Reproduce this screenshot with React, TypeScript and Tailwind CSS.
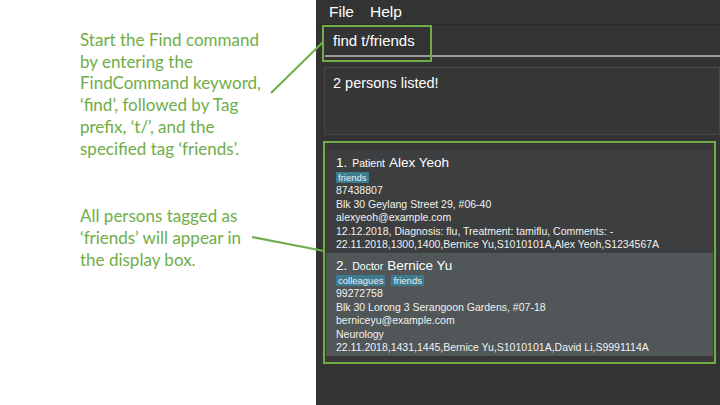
import React from "react"

const GREEN = "#70ad47"

interface Person {
  index: number
  role: string
  name: string
  tags: string[]
  lines: string[]
}

const persons: Person[] = [
  {
    index: 1,
    role: "Patient",
    name: "Alex Yeoh",
    tags: ["friends"],
    lines: [
      "87438807",
      "Blk 30 Geylang Street 29, #06-40",
      "alexyeoh@example.com",
      "12.12.2018, Diagnosis: flu, Treatment: tamiflu, Comments: -",
      "22.11.2018,1300,1400,Bernice Yu,S1010101A,Alex Yeoh,S1234567A",
    ],
  },
  {
    index: 2,
    role: "Doctor",
    name: "Bernice Yu",
    tags: ["colleagues", "friends"],
    lines: [
      "99272758",
      "Blk 30 Lorong 3 Serangoon Gardens, #07-18",
      "berniceyu@example.com",
      "Neurology",
      "22.11.2018,1431,1445,Bernice Yu,S1010101A,David Li,S9991114A",
    ],
  },
]

function PersonCard({ person, odd }: { person: Person; odd: boolean }) {
  return (
    <div className={`h-[103px] overflow-hidden pl-[10px] pt-[5px] ${odd ? "bg-[#3c3e3f]" : "bg-[#515658]"}`}>
      <div className="flex items-baseline h-[16px] leading-[16px] text-white">
        <span className="text-[13.5px]">{person.index}.</span>
        <span className="text-[10.5px] ml-[5px]">{person.role}</span>
        <span className="text-[13.5px] ml-[4px]">{person.name}</span>
      </div>
      <div className="flex gap-[6px] mt-[1px] h-[11px]">
        {person.tags.map((tag) => (
          <span key={tag} className="bg-[#3e7b91] text-[#e8f0f2] text-[9.5px] leading-[11px] px-[2px]">
            {tag}
          </span>
        ))}
      </div>
      <div className="mt-[1px] text-[10.5px] leading-[13.5px] text-[#f2f2f2]">
        {person.lines.map((line) => (
          <div key={line} className="whitespace-nowrap">{line}</div>
        ))}
      </div>
    </div>
  )
}

export default function App() {
  return (
    <div
      className="relative flex w-[720px] h-[405px] bg-white overflow-hidden"
      style={{ fontFamily: '"Liberation Sans", Arial, sans-serif' }}
    >
      {/* annotations */}
      <div
        className="w-[316px] pl-[80px] pt-[29px] text-[17px] leading-[21.7px] text-[#70ad47]"
        style={{ fontFamily: 'Lato, "Open Sans", sans-serif' }}
      >
        <p>
          Start the Find command
          <br />
          by entering the
          <br />
          FindCommand keyword,
          <br />
          ‘find’, followed by Tag
          <br />
          prefix, ‘t/’, and the
          <br />
          specified tag ‘friends’.
        </p>
        <p className="mt-[46px]">
          All persons tagged as
          <br />
          ‘friends’ will appear in
          <br />
          the display box.
        </p>
      </div>

      {/* app window */}
      <div className="flex-1 flex flex-col bg-[#333333] text-white">
        <div className="h-[25px] flex items-center gap-[16px] pl-[13px] text-[15.5px] border-b border-[#2b2b2b]">
          <span>File</span>
          <span>Help</span>
        </div>
        <div className="h-[37px] pl-[9px] border-b border-[#2c2c2c]">
          <div className="h-[32px] flex items-center pl-[8px] pt-[3px] text-[15px] border-b-2 border-[#9c9c9c]">
            find t/friends
          </div>
        </div>
        <div className="h-[79px] pl-[8px] pt-[5px] pb-[6px]">
          <div className="h-full bg-[#363636] border border-[#474747] pl-[8px] pt-[5px] text-[14.5px]">
            2 persons listed!
          </div>
        </div>
        <div className="ml-[7px] mr-[4px] h-[223px] border-2 border-[#70ad47] bg-[#383838] pt-[7px] px-[1px]">
          {persons.map((p, i) => (
            <PersonCard key={p.name} person={p} odd={i % 2 === 0} />
          ))}
        </div>
      </div>

      {/* highlight box over command */}
      <div className="absolute left-[322px] top-[25px] w-[110px] h-[37px] border-2 border-[#70ad47]" />

      {/* connector lines */}
      <svg className="absolute inset-0 pointer-events-none" width={720} height={405}>
        <line x1={271} y1={93} x2={323} y2={42} stroke={GREEN} strokeWidth={2} />
        <line x1={252} y1={237} x2={324} y2={251} stroke={GREEN} strokeWidth={2} />
      </svg>
    </div>
  )
}
